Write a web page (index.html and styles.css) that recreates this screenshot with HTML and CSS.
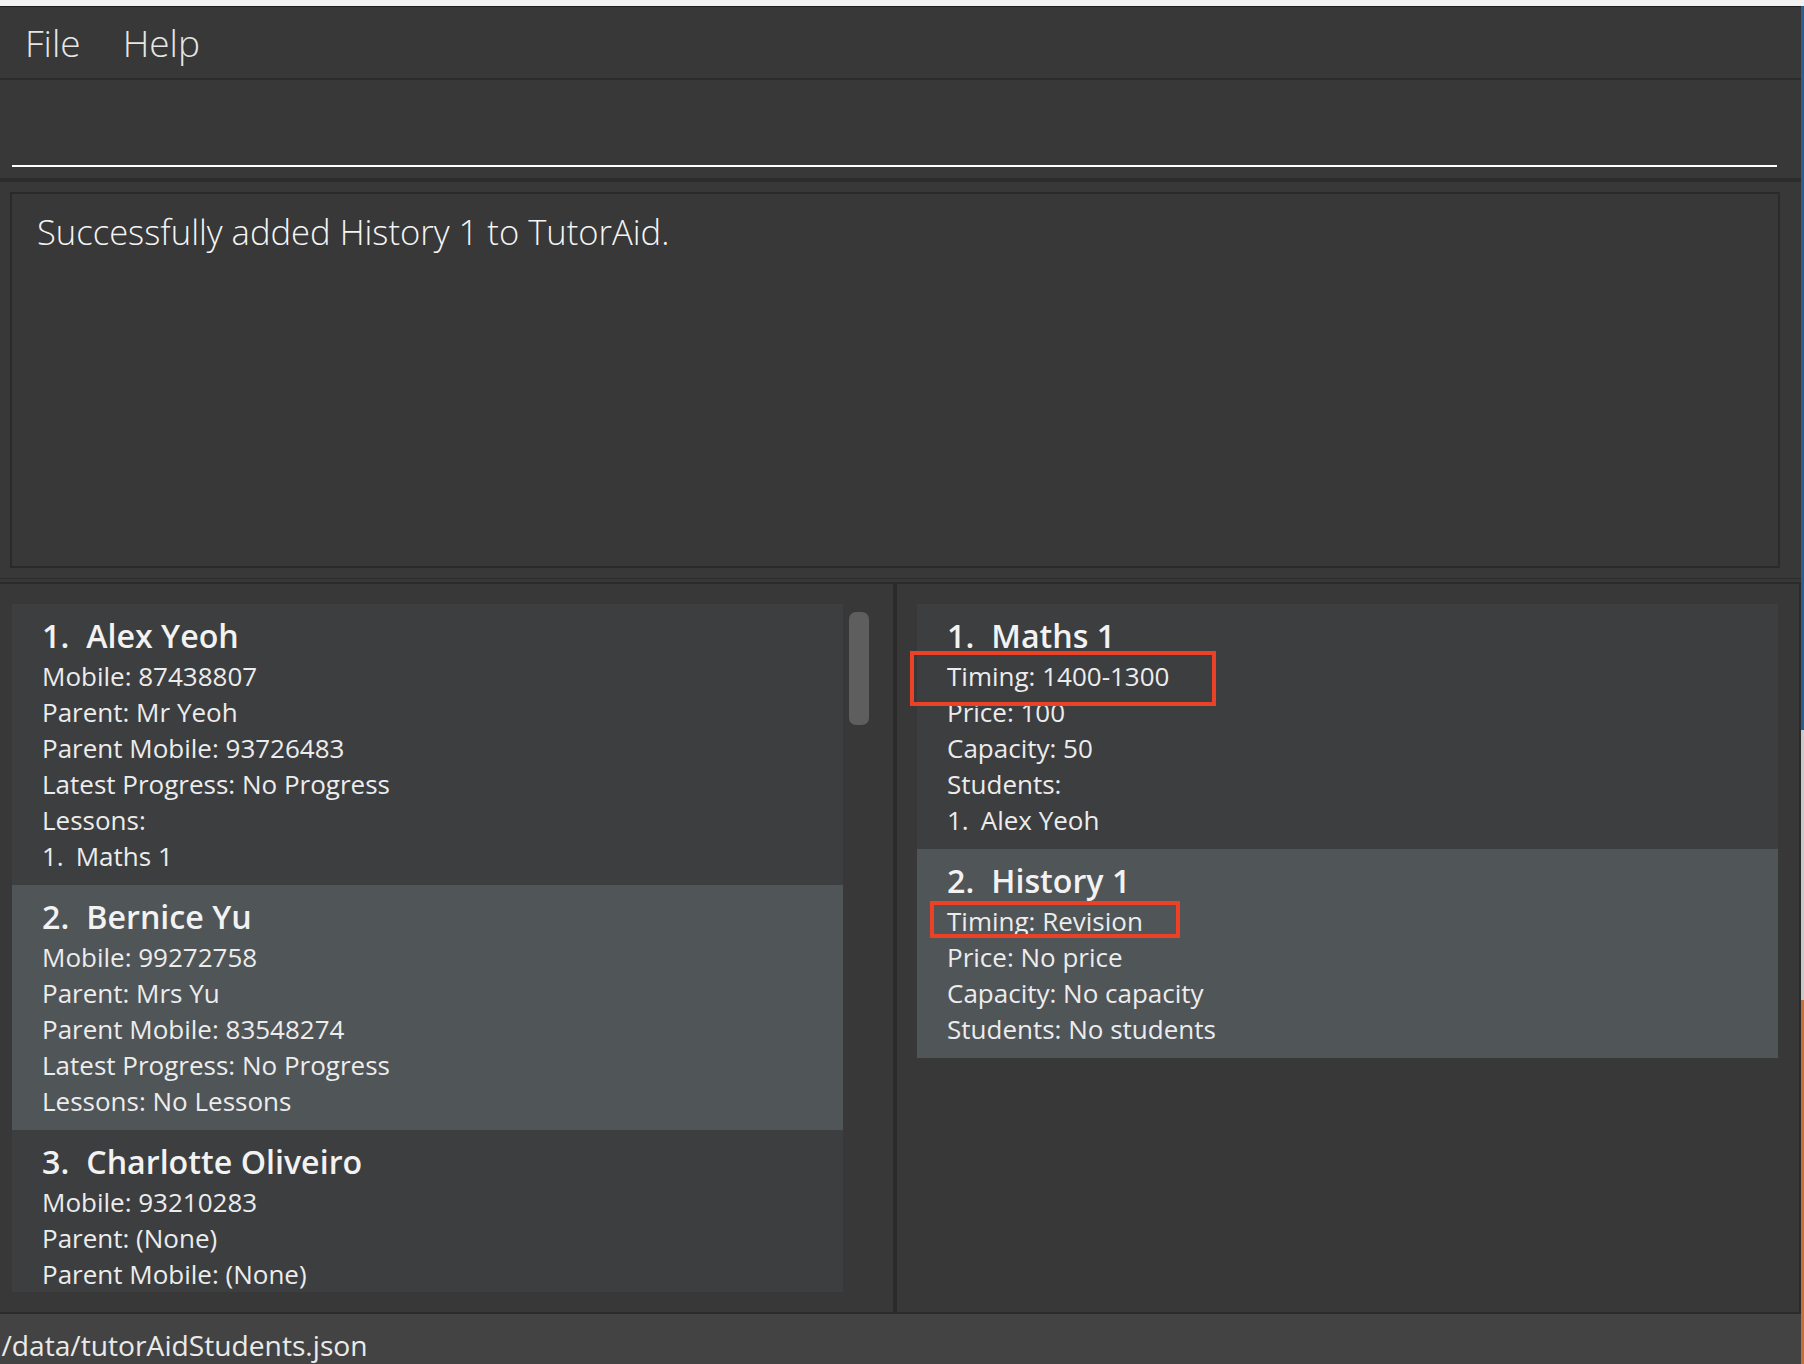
FILE: index.html
```html
<!DOCTYPE html>
<html lang="en">
<head>
<meta charset="utf-8">
<title>TutorAid</title>
<link rel="stylesheet" href="styles.css">
</head>
<body>
<div class="screen">
  <div class="window">
    <div class="topstrip"></div>
    <div class="menubar">
      <span class="menu-item">File</span>
      <span class="menu-item">Help</span>
    </div>
    <div class="command-area">
      <div class="command-field"></div>
    </div>
    <div class="sep-thick"></div>
    <div class="result-area">
      <div class="result-box">Successfully added History 1 to TutorAid.</div>
    </div>
    <div class="sep-double"></div>
    <div class="lower">
      <div class="panel-left">
        <div class="list">
          <div class="card">
            <div class="title"><span class="num">1.</span>Alex Yeoh</div>
            <div class="line">Mobile: 87438807</div>
            <div class="line">Parent: Mr Yeoh</div>
            <div class="line">Parent Mobile: 93726483</div>
            <div class="line">Latest Progress: No Progress</div>
            <div class="line">Lessons:</div>
            <div class="line"><span class="subnum">1.</span>Maths 1</div>
          </div>
          <div class="card selected">
            <div class="title"><span class="num">2.</span>Bernice Yu</div>
            <div class="line">Mobile: 99272758</div>
            <div class="line">Parent: Mrs Yu</div>
            <div class="line">Parent Mobile: 83548274</div>
            <div class="line">Latest Progress: No Progress</div>
            <div class="line">Lessons: No Lessons</div>
          </div>
          <div class="card">
            <div class="title"><span class="num">3.</span>Charlotte Oliveiro</div>
            <div class="line">Mobile: 93210283</div>
            <div class="line">Parent: (None)</div>
            <div class="line">Parent Mobile: (None)</div>
            <div class="line">Latest Progress: No Progress</div>
            <div class="line">Lessons: No Lessons</div>
          </div>
        </div>
        <div class="scroll-track"><div class="scroll-thumb"></div></div>
      </div>
      <div class="divider"></div>
      <div class="panel-right">
        <div class="list list-right">
          <div class="card">
            <div class="title"><span class="num">1.</span>Maths 1</div>
            <div class="line">Timing: 1400-1300</div>
            <div class="line">Price: 100</div>
            <div class="line">Capacity: 50</div>
            <div class="line">Students:</div>
            <div class="line"><span class="subnum">1.</span>Alex Yeoh</div>
            <div class="mark mark-maths"></div>
          </div>
          <div class="card selected">
            <div class="title"><span class="num">2.</span>History 1</div>
            <div class="line">Timing: Revision</div>
            <div class="line">Price: No price</div>
            <div class="line">Capacity: No capacity</div>
            <div class="line">Students: No students</div>
            <div class="mark mark-history"></div>
          </div>
        </div>
      </div>
    </div>
    <div class="statusbar"><span class="status-text">./data/tutorAidStudents.json</span></div>
  </div>
  <div class="desktop-edge"></div>
</div>
</body>
</html>
```

FILE: styles.css
```css
html, body {
  margin: 0;
  padding: 0;
}
body {
  background: #383838;
  overflow: hidden;
  font-family: "Open Sans", "Noto Sans", sans-serif;
  color: #f0f0f0;
}
.screen {
  display: flex;
  width: 1804px;
  height: 1364px;
}
.window {
  width: 1801px;
  height: 1364px;
  display: flex;
  flex-direction: column;
  background: #383838;
}
.desktop-edge {
  width: 3px;
  height: 1364px;
  background: linear-gradient(to bottom, #f2f2f2 0, #f2f2f2 6px, #2d5f8e 6px, #2d5f8e 730px, #c9c9c9 730px, #c9c9c9 1000px, #c8703c 1000px);
}
.topstrip {
  height: 6px;
  background: #f2f2f2;
  border-bottom: 1px solid #1e1e1e;
  flex: none;
}
.menubar {
  height: 71px;
  flex: none;
  display: flex;
  align-items: center;
  gap: 42px;
  padding-left: 25px;
  background: #383838;
  border-bottom: 2px solid #2b2b2b;
}
.menu-item {
  font-size: 37px;
  font-weight: 300;
  line-height: 71px;
  color: #e6e6e6;
}
.command-area {
  height: 98px;
  flex: none;
  padding: 0 24px 11px 12px;
  box-sizing: border-box;
  display: flex;
  flex-direction: column;
  justify-content: flex-end;
  background: #383838;
}
.command-field {
  height: 85px;
  border-bottom: 2px solid #ffffff;
}
.sep-thick {
  height: 4px;
  flex: none;
  background: #2c2c2c;
}
.result-area {
  height: 396px;
  flex: none;
  box-sizing: border-box;
  padding: 10px 21px 10px 10px;
}
.result-box {
  height: 100%;
  box-sizing: border-box;
  border: 2px solid #2a2a2a;
  background: #383838;
  padding: 13px 0 0 25px;
  font-size: 34.6px;
  font-weight: 300;
  line-height: 50px;
  color: #f4f4f4;
}
.sep-double {
  height: 3px;
  flex: none;
  border-top: 1px solid #2b2b2b;
  border-bottom: 2px solid #2b2b2b;
}
.lower {
  height: 728px;
  flex: none;
  display: flex;
  border-bottom: 2px solid #2b2b2b;
}
.panel-left {
  width: 893px;
  flex: none;
  box-sizing: border-box;
  padding: 20px 0 0 12px;
  display: flex;
  gap: 6px;
}
.list {
  width: 831px;
  height: 688px;
  overflow: hidden;
  display: flex;
  flex-direction: column;
}
.scroll-track {
  width: 20px;
  padding-top: 8px;
}
.scroll-thumb {
  width: 20px;
  height: 113px;
  border-radius: 7px;
  background: #5e5e5e;
}
.divider {
  width: 4px;
  flex: none;
  background: #2b2b2b;
}
.panel-right {
  flex: 1;
  box-sizing: border-box;
  padding: 20px 0 0 20px;
  border-right: 2px solid #2b2b2b;
}
.list-right {
  width: 861px;
  overflow: visible;
}
.card {
  position: relative;
  flex: none;
  background: #3c3e40;
  padding: 10px 0 11px 30px;
}
.card.selected {
  background: #505558;
}
.title {
  font-size: 32.2px;
  font-weight: 600;
  line-height: 44px;
  color: #f2f2f2;
  white-space: nowrap;
}
.num {
  margin-right: 17px;
}
.line {
  font-size: 26px;
  line-height: 36px;
  color: #ececec;
  white-space: nowrap;
}
.subnum {
  margin-right: 12px;
}
.mark {
  position: absolute;
  box-sizing: border-box;
  border: 4px solid #ea4127;
}
.mark-maths {
  left: -7px;
  top: 47px;
  width: 306px;
  height: 55px;
}
.mark-history {
  left: 13px;
  top: 52px;
  width: 250px;
  height: 37px;
}
.statusbar {
  flex: 1;
  background: #434343;
  overflow: hidden;
  box-sizing: border-box;
  padding-top: 6px;
}
.status-text {
  display: block;
  margin-left: -6px;
  font-size: 28.2px;
  line-height: 50px;
  color: #eaeaea;
  white-space: nowrap;
}
```
